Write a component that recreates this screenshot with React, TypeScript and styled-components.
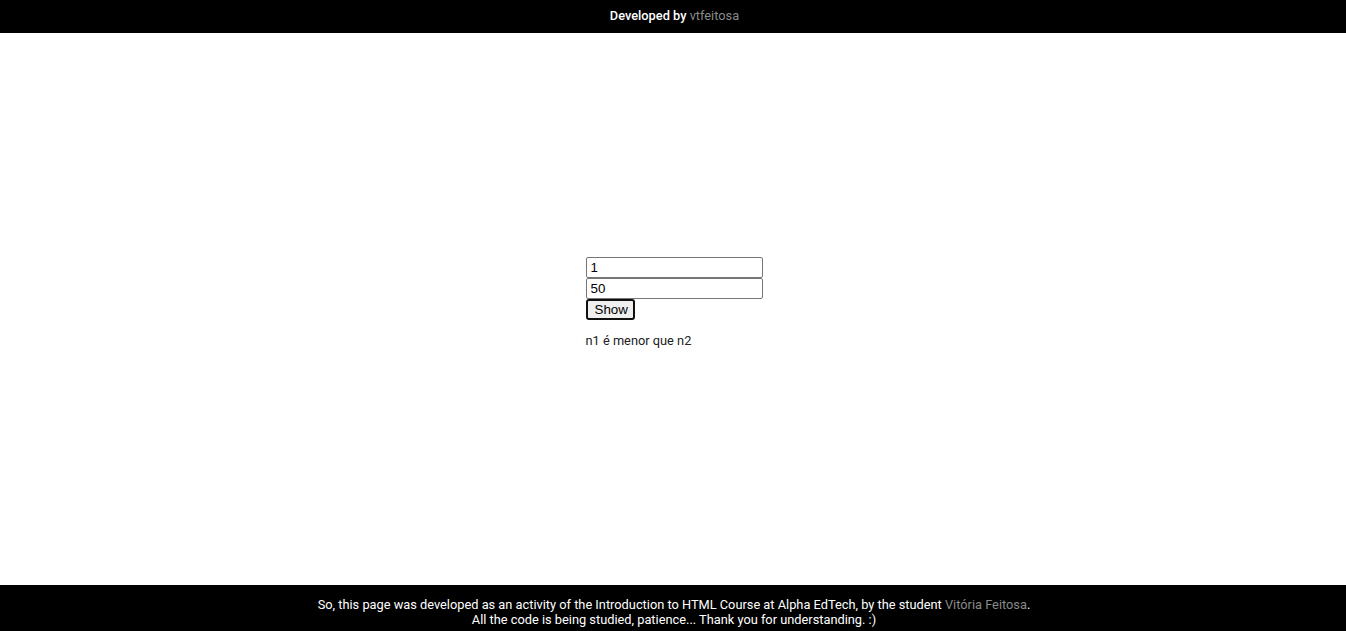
import React from "react";
import styled, { createGlobalStyle } from "styled-components";

const Global = createGlobalStyle`
  html, body { margin: 0; padding: 0; height: 100%; }
  body { font-family: Roboto, "Liberation Sans", Arial, sans-serif; background: #fff; color: #222; }
  #root { min-height: 100vh; display: flex; flex-direction: column; }
`;

const Header = styled.header`
  background: #000;
  height: 33px;
  box-sizing: border-box;
  padding: 0 0 2px 3px;
  display: flex;
  align-items: center;
  justify-content: center;
  color: #fff;
  font-size: 12.8px;
  font-weight: 500;
`;

const Muted = styled.span`
  color: #8a8a8a;
  font-weight: 400;
`;

const Main = styled.main`
  flex: 1;
  display: flex;
  flex-direction: column;
  align-items: center;
  justify-content: center;
  padding: 2px 0 0 2px;
`;

const Form = styled.div`
  width: 177px;
  display: flex;
  flex-direction: column;
  align-items: flex-start;
`;

const Input = styled.input`
  box-sizing: border-box;
  width: 177px;
  height: 21px;
  margin: 0;
  padding: 1px 4px;
  border: 1px solid #767676;
  border-radius: 2px;
  font-family: "Liberation Sans", Arial, sans-serif;
  font-size: 13.333px;
  color: #000;
  background: #fff;
`;

const Button = styled.button`
  box-sizing: border-box;
  height: 21px;
  width: 49px;
  margin: 0;
  padding: 0 6px 0 7px;
  border: 2px solid #101010;
  border-radius: 3px;
  background: #efefef;
  font-family: "Liberation Sans", Arial, sans-serif;
  font-size: 13.333px;
  color: #000;
`;

const Result = styled.p`
  margin: 13px 0 15px;
  font-size: 12.8px;
  line-height: 16px;
  color: #222;
`;

const Footer = styled.footer`
  background: #000;
  height: 46px;
  box-sizing: border-box;
  padding: 12px 0 0 2px;
  display: flex;
  flex-direction: column;
  align-items: center;
  justify-content: flex-start;
  color: #fff;
  font-size: 12.8px;
  line-height: 15px;
  text-align: center;
`;

export default function App() {
  return (
    <>
      <Global />
      <Header>
        <span>
          Developed by <Muted>vtfeitosa</Muted>
        </span>
      </Header>
      <Main>
        <Form>
          <Input type="text" defaultValue="1" />
          <Input type="text" defaultValue="50" />
          <Button>Show</Button>
          <Result>n1 é menor que n2</Result>
        </Form>
      </Main>
      <Footer>
        <div>
          So, this page was developed as an activity of the Introduction to HTML Course at Alpha EdTech, by the student{" "}
          <Muted>Vitória Feitosa</Muted>.
        </div>
        <div>All the code is being studied, patience... Thank you for understanding. :)</div>
      </Footer>
    </>
  );
}
